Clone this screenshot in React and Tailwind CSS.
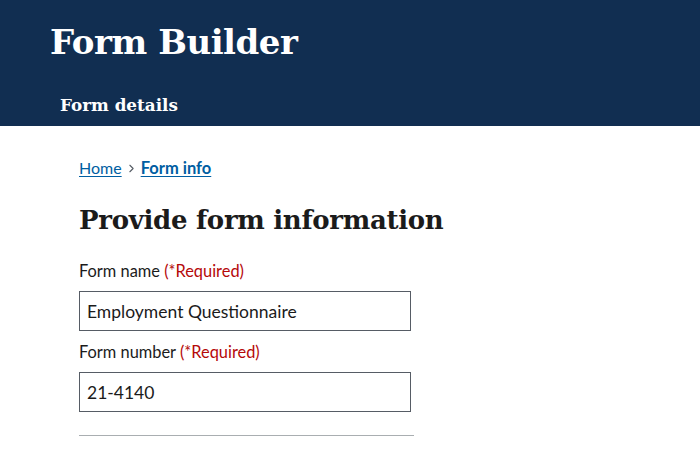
import React from 'react';
import { ChevronRight } from 'lucide-react';

const serif = "font-['DejaVu_Serif',serif]";
const sans = "font-['Lato','Noto_Sans',sans-serif]";

function Field({ label, value, first }) {
    return (
        <div className="flex flex-col">
            <label className={`${sans} text-[16.4px] leading-[20px] text-[#1b1b1b] ${first ? 'mt-[28px]' : 'mt-[11px]'}`}>
                {label} <span className="text-[#b50909]">(*Required)</span>
            </label>
            <input
                defaultValue={value}
                className={`${sans} mt-[10px] w-[332px] h-[40px] border border-[#565c65] px-[7px] text-[17.5px] text-[#1b1b1b] outline-none`}
            />
        </div>
    );
}

export default function App() {
    return (
        <div className="w-[700px] h-[452px] bg-white overflow-hidden">
            {/* header */}
            <header className="bg-[#112e51] h-[126px] text-white">
                <h1 className={`${serif} font-bold text-[34px] tracking-[-0.5px] leading-none pl-[50px] pt-[25px]`}>Form Builder</h1>
                <div className={`${serif} font-bold text-[16.8px] leading-none pl-[60px] pt-[38px]`}>Form details</div>
            </header>

            <main className="pl-[79px] pt-[32px]">
                <nav className={`${sans} text-[16px] leading-[20px] flex items-center gap-[3px]`}>
                    <a href="#" className="text-[#005ea2] underline underline-offset-2">Home</a>
                    <ChevronRight size={13} strokeWidth={2} className="text-[#565c65]" />
                    <a href="#" className="text-[#005ea2] underline underline-offset-2 font-bold text-[16.5px]">Form info</a>
                </nav>

                <h2 className={`${serif} font-bold text-[26px] tracking-[-0.3px] leading-none text-[#1b1b1b] mt-[29px]`}>
                    Provide form information
                </h2>

                <Field first label="Form name" value="Employment Questionnaire" />
                <Field label="Form number" value="21-4140" />

                <hr className="w-[335px] border-0 border-t border-[#a9aeb1] mt-[23px]" />
            </main>
        </div>
    );
}
